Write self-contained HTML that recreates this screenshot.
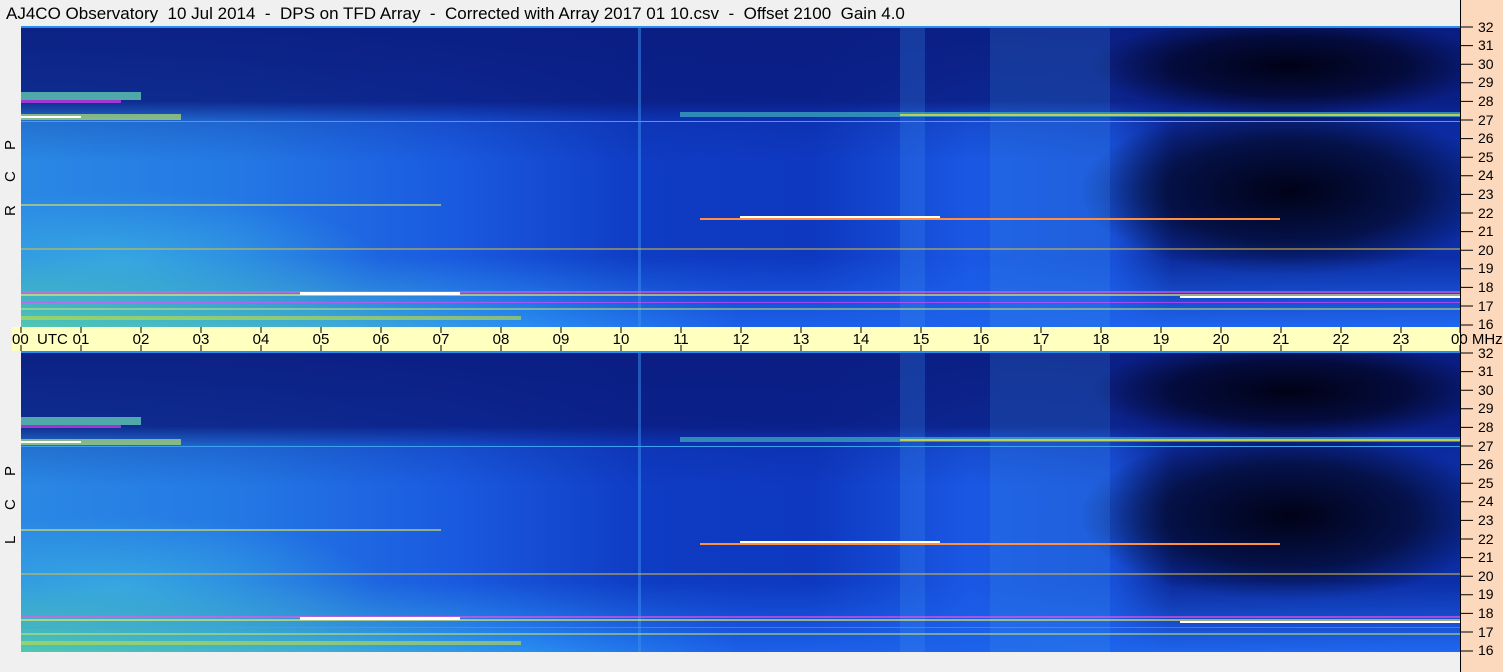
<!DOCTYPE html>
<html><head><style>
html,body{margin:0;padding:0;background:#f0f0f0;width:1503px;height:672px;overflow:hidden;font-family:"Liberation Sans",sans-serif;}
svg{position:absolute;left:0;top:0}
text{white-space:pre}
</style></head><body>
<svg width="1503" height="672" xmlns="http://www.w3.org/2000/svg" font-family="Liberation Sans, sans-serif" xml:space="preserve">
<defs>
<clipPath id="pc"><rect x="21" y="0" width="1439" height="301"/></clipPath>
<linearGradient id="hz" x1="0" x2="1" y1="0" y2="0">
<stop offset="0" stop-color="#2a88e4"/><stop offset="0.15" stop-color="#2478e4"/>
<stop offset="0.3" stop-color="#1a5ae0"/><stop offset="0.43" stop-color="#0f3cc4"/>
<stop offset="0.55" stop-color="#0e38c0"/><stop offset="0.66" stop-color="#1a58e4"/>
<stop offset="0.76" stop-color="#1850d8"/><stop offset="0.8" stop-color="#0c2a9a"/>
<stop offset="1" stop-color="#0c2ea8"/></linearGradient>
<linearGradient id="vt" x1="0" x2="0" y1="0" y2="1">
<stop offset="0" stop-color="#0a1c80" stop-opacity="0.95"/><stop offset="0.25" stop-color="#0a1c80" stop-opacity="0.85"/>
<stop offset="0.32" stop-color="#0a1c80" stop-opacity="0.2"/><stop offset="0.45" stop-color="#0a1c80" stop-opacity="0"/>
<stop offset="1" stop-color="#0a1c80" stop-opacity="0"/></linearGradient>
<linearGradient id="low" x1="0" x2="1" y1="0" y2="0">
<stop offset="0" stop-color="#50c8b0"/><stop offset="0.2" stop-color="#40b0d0"/>
<stop offset="0.35" stop-color="#2a8ef0"/><stop offset="0.5" stop-color="#1c60e8"/>
<stop offset="1" stop-color="#2068f0"/></linearGradient>
<linearGradient id="lowv" x1="0" x2="0" y1="0" y2="1">
<stop offset="0" stop-color="#fff" stop-opacity="0"/><stop offset="1" stop-color="#fff" stop-opacity="1"/></linearGradient>
<mask id="lm"><rect x="0" y="230" width="1503" height="71" fill="url(#lowv)"/></mask>
<radialGradient id="blk" cx="0.5" cy="0.5" r="0.5">
<stop offset="0" stop-color="#000010" stop-opacity="0.95"/><stop offset="0.6" stop-color="#000010" stop-opacity="0.6"/><stop offset="1" stop-color="#000010" stop-opacity="0"/></radialGradient>
<radialGradient id="cy" cx="0.5" cy="0.5" r="0.5">
<stop offset="0" stop-color="#40c0e0" stop-opacity="0.6"/><stop offset="1" stop-color="#40c0e0" stop-opacity="0"/></radialGradient>
<g id="panel"><g clip-path="url(#pc)">
<rect x="21" y="0" width="1439" height="301" fill="url(#hz)"/>
<rect x="21" y="0" width="1439" height="301" fill="url(#vt)"/>
<ellipse cx="1290" cy="40" rx="200" ry="50" fill="url(#blk)"/>
<ellipse cx="1290" cy="165" rx="210" ry="85" fill="url(#blk)"/>
<ellipse cx="120" cy="235" rx="260" ry="70" fill="url(#cy)"/>
<rect x="21" y="230" width="1439" height="71" fill="url(#low)" mask="url(#lm)"/>
<rect x="900" y="0" width="25" height="301" fill="#3a90f0" opacity="0.25"/>
<rect x="990" y="0" width="120" height="301" fill="#40a0f0" opacity="0.18"/>
<rect x="638" y="0" width="3" height="301" fill="#3a90f0" opacity="0.5"/>
<rect x="21" y="0" width="1439" height="2" fill="#2a8ef0"/>
<rect x="21" y="66" width="120" height="8" fill="#60c8b0" opacity="0.8"/>
<rect x="21" y="74" width="100" height="3" fill="#ff40ff" opacity="0.6"/>
<rect x="21" y="88" width="160" height="6" fill="#b0e070" opacity="0.7"/>
<rect x="21" y="90" width="60" height="2" fill="#ffffff"/>
<rect x="680" y="86" width="780" height="5" fill="#40b0c0" opacity="0.7"/>
<rect x="900" y="88" width="560" height="2" fill="#e0e040" opacity="0.8"/>
<rect x="21" y="95" width="1439" height="1" fill="#40a0f0"/>
<rect x="700" y="192" width="580" height="2" fill="#ff9040"/>
<rect x="740" y="190" width="200" height="2" fill="#ffffff"/>
<rect x="21" y="178" width="420" height="2" fill="#e0e060" opacity="0.6"/>
<rect x="21" y="222" width="1439" height="2" fill="#e0c040" opacity="0.5"/>
<rect x="21" y="265" width="1439" height="2" fill="#ff50e0" opacity="0.6"/>
<rect x="21" y="268" width="1439" height="2" fill="#f0f060" opacity="0.6"/>
<rect x="21" y="276" width="1439" height="1" fill="#ff40ff" opacity="0.6"/>
<rect x="300" y="266" width="160" height="3" fill="#ffffff"/>
<rect x="1180" y="270" width="280" height="2" fill="#ffffff"/>
<rect x="21" y="282" width="1439" height="2" fill="#d0f060" opacity="0.5"/>
<rect x="21" y="290" width="500" height="4" fill="#c0e040" opacity="0.6"/>
</g></g>
</defs>
<rect x="0" y="0" width="1503" height="672" fill="#f0f0f0"/>
<text x="6" y="19" font-size="17" fill="#000">AJ4CO Observatory  10 Jul 2014  -  DPS on TFD Array  -  Corrected with Array 2017 01 10.csv  -  Offset 2100  Gain 4.0</text>
<use href="#panel" transform="translate(0,26)"/>
<use href="#panel" transform="translate(0,351)"/>
<rect x="12" y="327" width="1458" height="24" fill="#ffffc0"/>
<rect x="1461" y="0" width="42" height="672" fill="#fcd8bc"/>
<rect x="1460" y="0" width="1" height="672" fill="#000"/>
<g stroke="#000" stroke-width="1">
<path d="M21 327v6M21 345v6M81 327v6M81 345v6M141 327v6M141 345v6M201 327v6M201 345v6M261 327v6M261 345v6M321 327v6M321 345v6M381 327v6M381 345v6M441 327v6M441 345v6M501 327v6M501 345v6M561 327v6M561 345v6M621 327v6M621 345v6M681 327v6M681 345v6M741 327v6M741 345v6M801 327v6M801 345v6M861 327v6M861 345v6M921 327v6M921 345v6M981 327v6M981 345v6M1041 327v6M1041 345v6M1101 327v6M1101 345v6M1161 327v6M1161 345v6M1221 327v6M1221 345v6M1281 327v6M1281 345v6M1341 327v6M1341 345v6M1401 327v6M1401 345v6M1460 327v6M1460 345v6"/>
</g>
<text x="12" y="344" font-size="15" fill="#000">00  UTC</text>
<g font-size="15" fill="#000" text-anchor="middle">
<text x="81" y="344">01</text><text x="141" y="344">02</text><text x="201" y="344">03</text><text x="261" y="344">04</text><text x="321" y="344">05</text><text x="381" y="344">06</text><text x="441" y="344">07</text><text x="501" y="344">08</text><text x="561" y="344">09</text><text x="621" y="344">10</text><text x="681" y="344">11</text><text x="741" y="344">12</text><text x="801" y="344">13</text><text x="861" y="344">14</text><text x="921" y="344">15</text><text x="981" y="344">16</text><text x="1041" y="344">17</text><text x="1101" y="344">18</text><text x="1161" y="344">19</text><text x="1221" y="344">20</text><text x="1281" y="344">21</text><text x="1341" y="344">22</text><text x="1401" y="344">23</text>
</g>
<text x="1451" y="344" font-size="15" fill="#000">00 MHz</text>
<g font-size="14" fill="#000">
<g id="ax">
<path d="M1461 27h12M1461 45.6h12M1461 64.2h12M1461 82.8h12M1461 101.4h12M1461 120h12M1461 138.6h12M1461 157.2h12M1461 175.8h12M1461 194.4h12M1461 213h12M1461 231.6h12M1461 250.2h12M1461 268.8h12M1461 287.4h12M1461 306h12M1461 325h12" stroke="#000"/>
<text x="1478" y="32">32</text><text x="1478" y="50">31</text><text x="1478" y="69">30</text><text x="1478" y="87">29</text><text x="1478" y="106">28</text><text x="1478" y="125">27</text><text x="1478" y="143">26</text><text x="1478" y="162">25</text><text x="1478" y="180">24</text><text x="1478" y="199">23</text><text x="1478" y="218">22</text><text x="1478" y="236">21</text><text x="1478" y="255">20</text><text x="1478" y="273">19</text><text x="1478" y="292">18</text><text x="1478" y="311">17</text><text x="1478" y="329">16</text>
</g>
<use href="#ax" transform="translate(0,326)"/>
</g>
<g font-size="15" fill="#000">
<text transform="translate(15,150) rotate(-90)">P</text>
<text transform="translate(15,182) rotate(-90)">C</text>
<text transform="translate(15,216) rotate(-90)">R</text>
<text transform="translate(15,476) rotate(-90)">P</text>
<text transform="translate(15,510) rotate(-90)">C</text>
<text transform="translate(15,544) rotate(-90)">L</text>
</g>
</svg>
</body></html>
